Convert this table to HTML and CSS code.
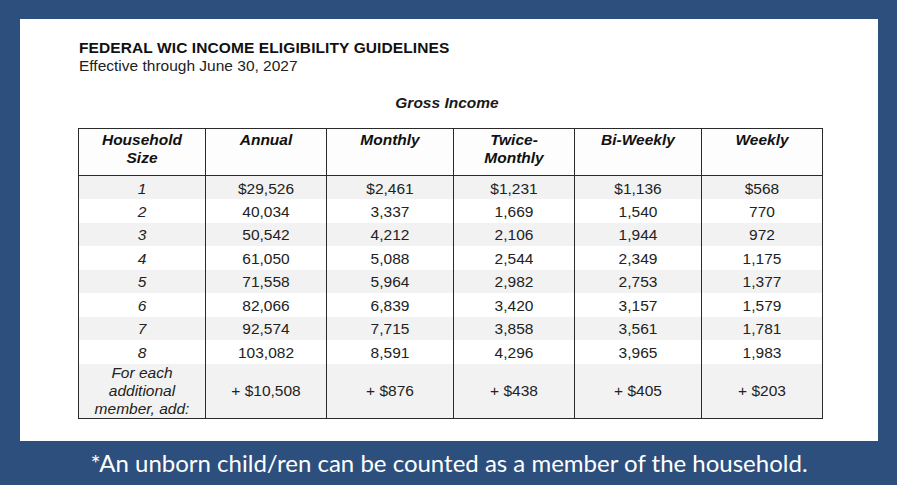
FILE: index.html
```html
<!DOCTYPE html>
<html lang="en">
<head>
<meta charset="utf-8">
<title>Federal WIC Income Eligibility Guidelines</title>
<link rel="stylesheet" href="styles.css">
</head>
<body>
<div class="frame">
  <div class="panel">
    <div class="heading">
      <div class="title">FEDERAL WIC INCOME ELIGIBILITY GUIDELINES</div>
      <div class="subtitle">Effective through June 30, 2027</div>
    </div>
    <div class="gross">Gross Income</div>
    <table class="guide">
      <colgroup>
        <col class="c-wide"><col class="c-narrow"><col class="c-wide"><col class="c-narrow"><col class="c-wide"><col class="c-narrow">
      </colgroup>
      <thead>
        <tr>
          <th>Household<br>Size</th>
          <th>Annual</th>
          <th>Monthly</th>
          <th>Twice-<br>Monthly</th>
          <th>Bi-Weekly</th>
          <th>Weekly</th>
        </tr>
      </thead>
      <tbody>
        <tr class="shade"><td class="size">1</td><td>$29,526</td><td>$2,461</td><td>$1,231</td><td>$1,136</td><td>$568</td></tr>
        <tr><td class="size">2</td><td>40,034</td><td>3,337</td><td>1,669</td><td>1,540</td><td>770</td></tr>
        <tr class="shade"><td class="size">3</td><td>50,542</td><td>4,212</td><td>2,106</td><td>1,944</td><td>972</td></tr>
        <tr><td class="size">4</td><td>61,050</td><td>5,088</td><td>2,544</td><td>2,349</td><td>1,175</td></tr>
        <tr class="shade"><td class="size">5</td><td>71,558</td><td>5,964</td><td>2,982</td><td>2,753</td><td>1,377</td></tr>
        <tr><td class="size">6</td><td>82,066</td><td>6,839</td><td>3,420</td><td>3,157</td><td>1,579</td></tr>
        <tr class="shade"><td class="size">7</td><td>92,574</td><td>7,715</td><td>3,858</td><td>3,561</td><td>1,781</td></tr>
        <tr><td class="size">8</td><td>103,082</td><td>8,591</td><td>4,296</td><td>3,965</td><td>1,983</td></tr>
        <tr class="shade extra"><td class="size">For each<br>additional<br>member, add:</td><td>+ $10,508</td><td>+ $876</td><td>+ $438</td><td>+ $405</td><td>+ $203</td></tr>
      </tbody>
    </table>
  </div>
  <p class="note">*An unborn child/ren can be counted as a member of the household.</p>
</div>
</body>
</html>
```

FILE: styles.css
```css
* { box-sizing: border-box; }

html, body {
  margin: 0;
  padding: 0;
}

body {
  background: #2c4f7d;
  width: 897px;
  height: 485px;
  overflow: hidden;
}

.frame {
  display: flex;
  flex-direction: column;
  padding: 19px 19px 0 20px;
}

.panel {
  background: #ffffff;
  height: 422px;
  padding: 20px 0 0 58px;
  font-family: "Liberation Sans", Arial, sans-serif;
  font-size: 15.5px;
  color: #1a1a1a;
}

.heading {
  padding-left: 1px;
}

.title {
  font-weight: bold;
  line-height: 18px;
  letter-spacing: 0.1px;
  color: #111;
}

.subtitle {
  line-height: 18px;
  color: #222;
}

.gross {
  width: 742px;
  text-align: center;
  font-weight: bold;
  font-style: italic;
  line-height: 18px;
  margin-top: 19px;
  padding-right: 4px;
  color: #1a1a1a;
}

.guide {
  margin-top: 16px;
  width: 742px;
  border-collapse: collapse;
  table-layout: fixed;
  border: 1px solid #2a2a2a;
}

.c-wide { width: 127px; }
.c-narrow { width: 121px; }

.guide th {
  height: 47px;
  vertical-align: top;
  padding: 2px 2px 0;
  font-weight: bold;
  font-style: italic;
  font-size: 15.5px;
  line-height: 17.5px;
  text-align: center;
  color: #111;
  background: #fdfdfd;
  border: 1px solid #2a2a2a;
}

.guide td {
  height: 23.5px;
  padding: 2px 2px 0;
  font-size: 15.5px;
  line-height: 18px;
  text-align: center;
  color: #222;
  border-left: 1px solid #2a2a2a;
  border-right: 1px solid #2a2a2a;
}

.guide td.size {
  font-style: italic;
}

.guide tr.shade td {
  background: #f2f2f2;
}

.guide tr.extra td {
  height: 54px;
  padding-top: 0;
  line-height: 18px;
}

.note {
  margin: 0;
  height: 44px;
  padding-top: 7px;
  text-align: center;
  font-family: Lato, "Open Sans", sans-serif;
  font-size: 24px;
  line-height: 29px;
  color: #ffffff;
}
```
